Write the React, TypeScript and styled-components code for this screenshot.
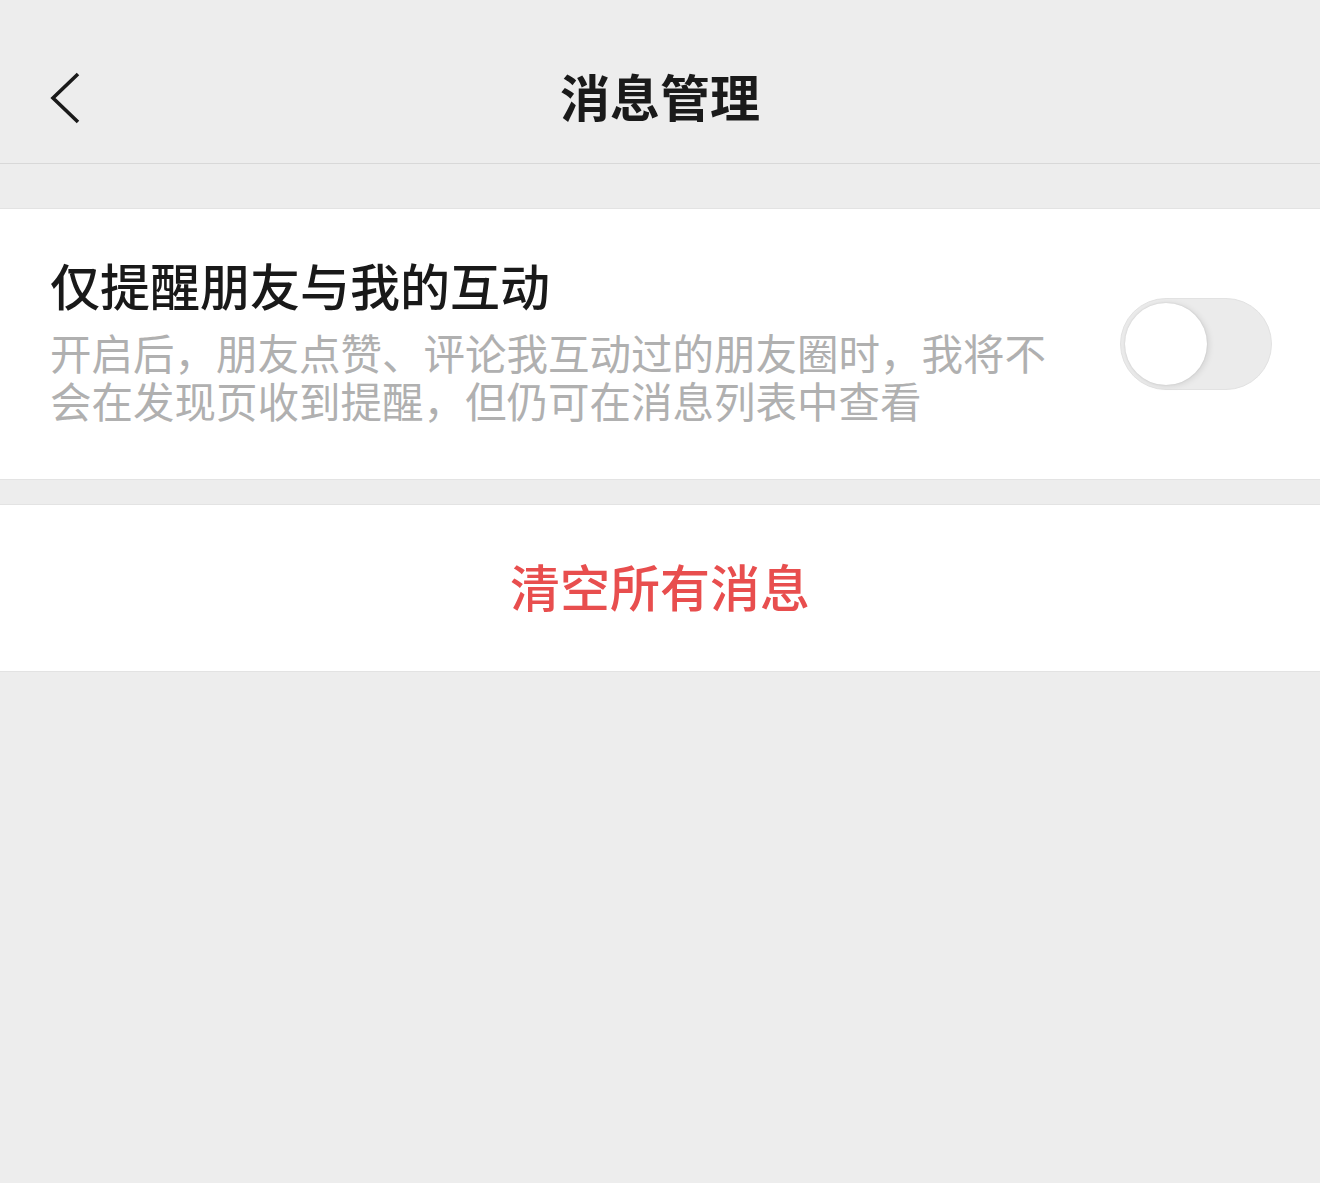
import React from "react";
import styled, { createGlobalStyle } from "styled-components";

const GlobalStyle = createGlobalStyle`
  html, body {
    margin: 0;
    padding: 0;
    background: #ededed;
  }
  body {
    font-family: "Noto Sans CJK SC", "Noto Sans", sans-serif;
    -webkit-font-smoothing: antialiased;
  }
  * { box-sizing: border-box; }
`;

const Page = styled.div`
  min-height: 100vh;
  background: #ededed;
  display: flex;
  flex-direction: column;
`;

const Header = styled.header`
  height: 164px;
  padding-top: 32px;
  border-bottom: 1px solid #d8d8d8;
  display: grid;
  grid-template-columns: 1fr auto 1fr;
  align-items: start;
`;

const HeaderRow = styled.div`
  height: 126px;
  display: flex;
  align-items: center;
`;

const BackButton = styled.button`
  border: none;
  background: transparent;
  padding: 0 0 0 48px;
  margin-top: 3px;
  height: 126px;
  display: flex;
  align-items: center;
  cursor: pointer;
  justify-self: start;
`;

const Title = styled.h1`
  margin: 0;
  height: 126px;
  display: flex;
  align-items: center;
  font-size: 50px;
  font-weight: 700;
  color: #1a1a1a;
  letter-spacing: 0;
`;

const Section = styled.section<{ $top: number }>`
  margin-top: ${(p) => p.$top}px;
  background: #ffffff;
  border-top: 1px solid #e3e3e3;
  border-bottom: 1px solid #e3e3e3;
`;

const SettingRow = styled.div`
  display: flex;
  align-items: center;
  padding: 0 48px 0 50px;
  min-height: 270px;
`;

const TextCol = styled.div`
  flex: 0 0 1002px;
  padding: 44px 0 54px;
  display: flex;
  flex-direction: column;
  gap: 14px;
`;

const RowTitle = styled.div`
  font-size: 50px;
  line-height: 60px;
  font-weight: 500;
  color: #191919;
`;

const RowDesc = styled.p`
  margin: 0;
  font-size: 41.5px;
  line-height: 48px;
  font-weight: 400;
  color: #b0b0b0;
`;

const Switch = styled.div<{ $on: boolean }>`
  flex-shrink: 0;
  margin-left: auto;
  width: 152px;
  height: 92px;
  border-radius: 46px;
  padding: 4px;
  background: ${(p) => (p.$on ? "#07c160" : "#ebebeb")};
  border: 1px solid #e2e2e2;
  display: flex;
  justify-content: ${(p) => (p.$on ? "flex-end" : "flex-start")};
  align-items: center;
`;

const Knob = styled.div`
  width: 82px;
  height: 82px;
  border-radius: 50%;
  background: #ffffff;
  box-shadow: 0 0 2px rgba(0, 0, 0, 0.12), 2px 1px 6px rgba(0, 0, 0, 0.1);
`;

const ActionRow = styled.button`
  width: 100%;
  height: 166px;
  padding: 0 0 6px;
  border: none;
  background: transparent;
  display: flex;
  align-items: center;
  justify-content: center;
  font-family: inherit;
  font-size: 50px;
  font-weight: 500;
  color: #e84e4e;
  cursor: pointer;
`;

const Spacer = styled.div``;

export default function App() {
  return (
    <>
      <GlobalStyle />
      <Page>
        <Header>
          <BackButton aria-label="返回">
            <svg width="34" height="54" viewBox="0 0 34 54" fill="none">
              <path
                d="M30 3 L5 27 L30 51"
                stroke="#1a1a1a"
                strokeWidth="3.6"
                strokeLinecap="butt"
                strokeLinejoin="miter"
              />
            </svg>
          </BackButton>
          <HeaderRow>
            <Title>消息管理</Title>
          </HeaderRow>
          <Spacer />
        </Header>

        <Section $top={44}>
          <SettingRow>
            <TextCol>
              <RowTitle>仅提醒朋友与我的互动</RowTitle>
              <RowDesc>
                开启后，朋友点赞、评论我互动过的朋友圈时，我将不会在发现页收到提醒，但仍可在消息列表中查看
              </RowDesc>
            </TextCol>
            <Switch $on={false} role="switch" aria-checked={false}>
              <Knob />
            </Switch>
          </SettingRow>
        </Section>

        <Section $top={24}>
          <ActionRow>清空所有消息</ActionRow>
        </Section>
      </Page>
    </>
  );
}
